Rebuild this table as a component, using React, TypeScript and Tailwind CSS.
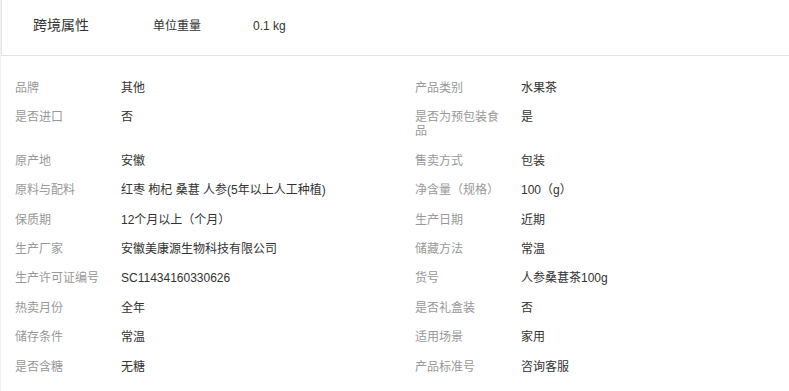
const rows: [string, string, string, string][] = [
  ["品牌", "其他", "产品类别", "水果茶"],
  ["是否进口", "否", "是否为预包装食品", "是"],
  ["原产地", "安徽", "售卖方式", "包装"],
  ["原料与配料", "红枣 枸杞 桑葚 人参(5年以上人工种植)", "净含量（规格）", "100（g）"],
  ["保质期", "12个月以上（个月）", "生产日期", "近期"],
  ["生产厂家", "安徽美康源生物科技有限公司", "储藏方法", "常温"],
  ["生产许可证编号", "SC11434160330626", "货号", "人参桑葚茶100g"],
  ["热卖月份", "全年", "是否礼盒装", "否"],
  ["储存条件", "常温", "适用场景", "家用"],
  ["是否含糖", "无糖", "产品标准号", "咨询客服"],
];

const Cell = ({ label, value }: { label: string; value: string }) => (
  <div className="flex items-start py-[7.5px] leading-[14.4px]">
    <div className="w-[92px] shrink-0 text-[#999]">{label}</div>
    <div className="ml-[14px] text-[#333]">{value}</div>
  </div>
);

export default function App() {
  return (
    <div
      className="w-[789px] h-[391px] bg-white border-l border-[#f2f2f2] overflow-hidden"
      style={{ fontFamily: '"Liberation Sans", "Noto Sans CJK SC", sans-serif' }}
    >
      <div className="h-[56px] border-l border-b border-[#e3e3e3] flex items-center pb-[4px]">
        <div className="ml-[31px] w-[120px] text-[14px] text-[#333]">跨境属性</div>
        <div className="w-[100px] text-[12px] text-[#333]">单位重量</div>
        <div className="text-[12px] text-[#333]">0.1 kg</div>
      </div>
      <div className="pt-[17px] pl-[14px] text-[12px]">
        {rows.map((r, i) => (
          <div key={i} className="grid grid-cols-[400px_1fr]">
            <Cell label={r[0]} value={r[1]} />
            <Cell label={r[2]} value={r[3]} />
          </div>
        ))}
      </div>
    </div>
  );
}
